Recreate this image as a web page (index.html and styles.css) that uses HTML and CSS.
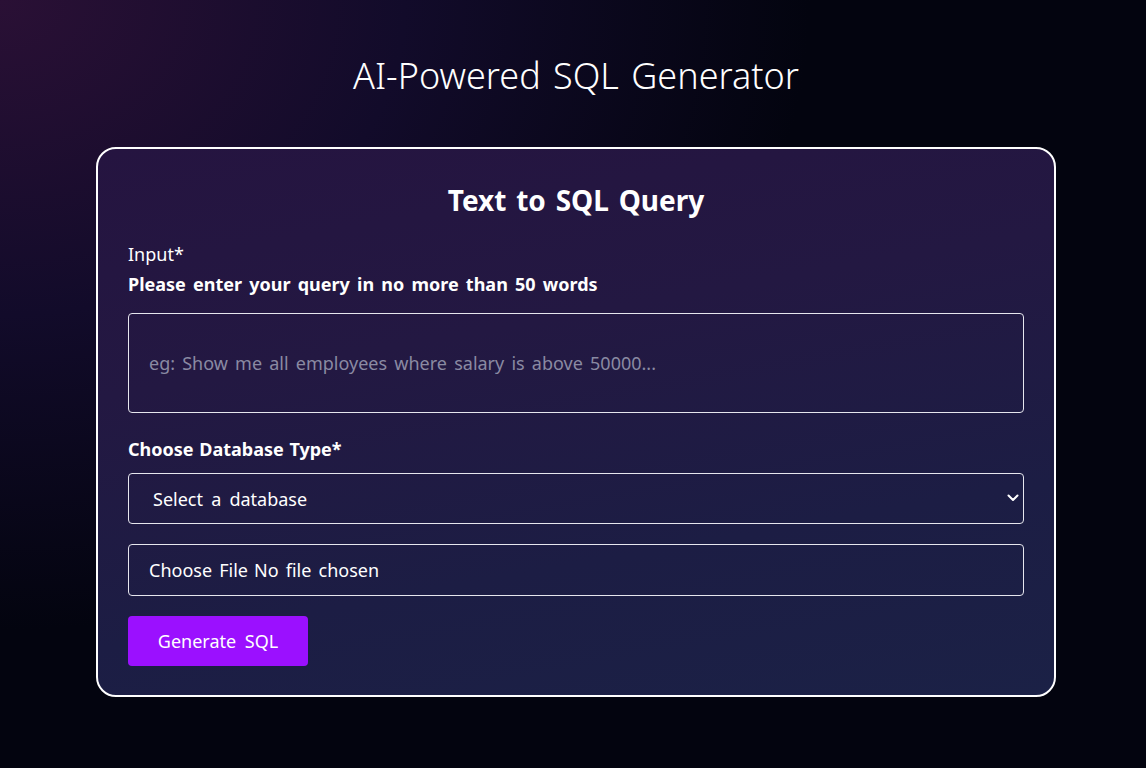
FILE: index.html
```html
<!DOCTYPE html>
<html lang="en">
<head>
<meta charset="utf-8">
<title>AI-Powered SQL Generator</title>
<link rel="stylesheet" href="styles.css">
</head>
<body>
<main class="page">
  <h1 class="page-title">AI-Powered SQL Generator</h1>
  <form class="card">
    <h2 class="card-title">Text to SQL Query</h2>
    <label class="label-plain" for="query">Input*</label>
    <p class="label-strong">Please enter your query in no more than 50 words</p>
    <textarea id="query" class="field field-area" placeholder="eg: Show me all employees where salary is above 50000..."></textarea>
    <label class="label-strong label-db" for="db">Choose Database Type*</label>
    <div class="select-wrap">
      <select id="db" class="field field-select">
        <option>Select a database</option>
        <option>MySQL</option>
        <option>PostgreSQL</option>
      </select>
      <svg class="chevron" width="12" height="8" viewBox="0 0 12 8" aria-hidden="true"><path d="M1.5 1.5 6 6l4.5-4.5" fill="none" stroke="#fff" stroke-width="2" stroke-linecap="round" stroke-linejoin="round"/></svg>
    </div>
    <input type="file" class="field field-file">
    <button type="button" class="btn">Generate SQL</button>
  </form>
</main>
</body>
</html>
```
FILE: styles.css
```css
* { box-sizing: border-box; }
html, body { margin: 0; height: 100%; }
body {
  font-family: "Noto Sans", "Open Sans", sans-serif;
  color: #fff;
  word-spacing: 2.5px;
  background: radial-gradient(ellipse 900px 700px at 0% 0%, #2a1035 0%, #120b2a 45%, #03040f 90%) #03040f;
  min-height: 768px;
}
.page {
  display: flex;
  flex-direction: column;
  align-items: center;
  padding: 52px 0 0 6px;
}
.page-title {
  margin: 0;
  font-size: 36px;
  font-weight: 300;
  line-height: 48px;
  word-spacing: 3px;
}
.card {
  margin-top: 47px;
  width: 960px;
  border: 2px solid #fff;
  border-radius: 20px;
  padding: 34px 30px 29px;
  background: linear-gradient(170deg, #251440 0%, #231842 35%, #1c1d44 70%, #1b2146 100%);
  display: flex;
  flex-direction: column;
  align-items: stretch;
}
.card-title {
  margin: 0 0 22px;
  text-align: center;
  font-size: 28px;
  font-weight: 700;
  line-height: 34px;
}
.label-plain {
  font-size: 18px;
  line-height: 30px;
  font-weight: 400;
}
.label-strong {
  margin: 0;
  font-size: 18px;
  line-height: 30px;
  font-weight: 700;
}
.label-db { word-spacing: 1px; }
.field {
  width: 100%;
  background: transparent;
  color: #fff;
  border: 1px solid #e6e6ee;
  border-radius: 4px;
  font-family: inherit;
  font-size: 18px;
  word-spacing: 2.5px;
  outline: none;
}
.field-area {
  margin-top: 14px;
  height: 100px;
  padding: 36px 20px;
  resize: none;
  line-height: 26px;
}
.field-area::placeholder { color: #8a8aa2; }
.label-db { margin-top: 21px; }
.select-wrap {
  position: relative;
  margin-top: 9px;
}
.field-select {
  appearance: none;
  -webkit-appearance: none;
  height: 51px;
  padding: 0 24px;
  display: block;
  word-spacing: 3.5px;
}
.field-select option { color: #000; }
.chevron {
  position: absolute;
  right: 5px;
  top: 21px;
  pointer-events: none;
}
.field-file {
  margin-top: 20px;
  height: 52px;
  padding: 12px 20px;
  line-height: 26px;
}
.field-file::file-selector-button {
  background: none;
  border: none;
  color: #fff;
  font: inherit;
  word-spacing: 2.5px;
  padding: 0;
  margin: 0 6px 0 0;
}
.btn {
  margin-top: 20px;
  align-self: flex-start;
  width: 180px;
  height: 50px;
  border: none;
  border-radius: 4px;
  background: #9b10ff;
  color: #fff;
  font-family: inherit;
  font-size: 18px;
  word-spacing: 4px;
}
```
